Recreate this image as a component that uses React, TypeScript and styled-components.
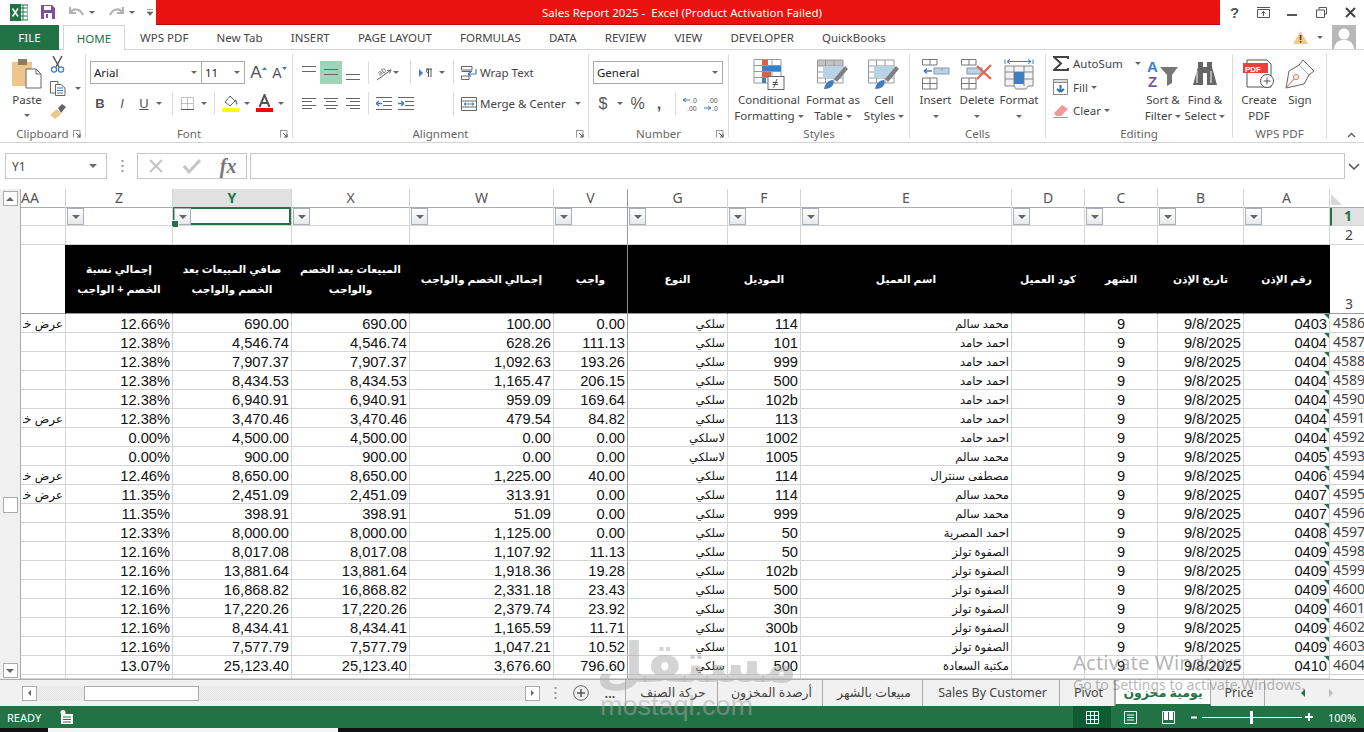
import React from "react";
import styled, { createGlobalStyle, css } from "styled-components";

const UI_FONT = `"Noto Sans", "Open Sans", "Liberation Sans", sans-serif`;
const CELL_FONT = `"Liberation Sans", "DejaVu Sans", sans-serif`;

const GlobalStyle = createGlobalStyle`
  html, body { margin: 0; padding: 0; height: 100%; overflow: hidden; background: #fff; }
  * { box-sizing: border-box; }
  svg { display: block; flex-shrink: 0; }
`;

const Win = styled.div`
  position: relative;
  width: 1364px;
  height: 732px;
  display: flex;
  flex-direction: column;
  overflow: hidden;
  font-family: ${UI_FONT};
  font-size: 11.5px;
  color: #444;
  background: #fff;
`;

/* ---------- title bar ---------- */
const TitleBar = styled.div`
  height: 25px;
  display: flex;
  align-items: flex-start;
  flex-shrink: 0;
`;
const Qat = styled.div`
  width: 156px;
  height: 24px;
  display: flex;
  align-items: center;
  padding-left: 10px;
  flex-shrink: 0;
`;
const RedTitle = styled.div`
  width: 1064px;
  height: 25px;
  background: #ea1111;
  border-bottom: 1px solid #b80d0d;
  color: #fff;
  font-size: 11.5px;
  line-height: 25px;
  text-align: center;
  white-space: pre;
  padding-right: 12px;
  flex-shrink: 0;
`;
const WinControls = styled.div`
  flex: 1;
  height: 24px;
  display: flex;
  align-items: center;
`;
const CtrlBtn = styled.div`
  width: 29px;
  display: flex;
  justify-content: center;
  flex-shrink: 0;
`;

/* ---------- ribbon tabs ---------- */
const TabStrip = styled.div`
  height: 25px;
  display: flex;
  border-bottom: 1px solid #d4d4d4;
  flex-shrink: 0;
`;
const FileTab = styled.div`
  width: 59px;
  height: 25px;
  background: #217346;
  color: #fff;
  text-align: center;
  line-height: 25px;
  margin-right: 4px;
`;
const RibbonTab = styled.div<{ $active?: boolean }>`
  height: 25px;
  padding: 0 14.1px;
  line-height: 25px;
  white-space: nowrap;
  ${(p) =>
    p.$active &&
    css`
      width: 62px;
      padding: 0;
      text-align: center;
      margin-right: 1px;
      color: #217346;
      background: #fff;
      border: 1px solid #d4d4d4;
      border-bottom: 0;
    `}
`;
const Account = styled.div`
  margin-left: auto;
  display: flex;
  align-items: center;
  height: 24px;
  gap: 9px;
  padding-right: 8px;
`;
const Avatar = styled.div`
  width: 24px;
  height: 24px;
  background: #b8b8b8;
`;

/* ---------- ribbon ---------- */
const Ribbon = styled.div`
  height: 93px;
  display: flex;
  border-bottom: 1px solid #d4d4d4;
  padding-top: 4px;
  padding-bottom: 4px;
  position: relative;
  flex-shrink: 0;
`;
const Group = styled.div<{ $w: number }>`
  width: ${(p) => p.$w}px;
  display: flex;
  flex-direction: column;
  border-right: 1px solid #dcdcdc;
  flex-shrink: 0;
`;
const GroupBody = styled.div<{ $pad?: number; $col?: boolean }>`
  flex: 1;
  display: flex;
  flex-direction: ${(p) => (p.$col ? "column" : "row")};
  padding-left: ${(p) => p.$pad ?? 0}px;
  min-height: 0;
`;
const GroupLabel = styled.div`
  height: 16px;
  margin-bottom: -4px;
  line-height: 16px;
  text-align: center;
  color: #666;
  position: relative;
`;
const Launcher = styled.span`
  position: absolute;
  right: 4px;
  top: 4px;
`;
const Collapse = styled.span`
  position: absolute;
  right: 8px;
  bottom: 4px;
`;
const BigBtn = styled.div<{ $w: number }>`
  width: ${(p) => p.$w}px;
  display: flex;
  flex-direction: column;
  align-items: center;
  text-align: center;
  line-height: 16px;
  padding-top: 2px;
  flex-shrink: 0;
  white-space: nowrap;
`;
const BigIcon = styled.div`
  height: 36px;
  display: flex;
  align-items: center;
  justify-content: center;
`;
const SmallStack = styled.div<{ $w?: number }>`
  ${(p) => p.$w && `width: ${p.$w}px;`}
  display: flex;
  flex-direction: column;
  padding-top: 1px;
  gap: 6.500px;
  flex-shrink: 0;
`;
const Row = styled.div<{ $h?: number; $mt?: number; $gap?: number }>`
  display: flex;
  align-items: center;
  height: ${(p) => p.$h ?? 23}px;
  margin-top: ${(p) => p.$mt ?? 0}px;
  gap: ${(p) => p.$gap ?? 0}px;
  white-space: nowrap;
`;
const Spacer = styled.span<{ $w: number }>`
  display: inline-block;
  width: ${(p) => p.$w}px;
  flex-shrink: 0;
`;
const Divider = styled.span`
  width: 1px;
  height: 23px;
  background: #dcdcdc;
  flex-shrink: 0;
`;
const Combo = styled.div<{ $w: number }>`
  width: ${(p) => p.$w}px;
  height: 23px;
  border: 1px solid #ababab;
  background: #fff;
  display: flex;
  align-items: center;
  justify-content: space-between;
  padding: 0 4px 0 3px;
  color: #222;
  margin-right: -1px;
  flex-shrink: 0;
`;
const Caret = styled.span<{ $ml?: number }>`
  display: inline-block;
  width: 0;
  height: 0;
  border-left: 3px solid transparent;
  border-right: 3px solid transparent;
  border-top: 3px solid #666;
  margin-left: ${(p) => p.$ml ?? 0}px;
  flex-shrink: 0;
`;
const Letter = styled.span<{ $w: number; $b?: boolean; $i?: boolean; $u?: boolean; $size?: number }>`
  width: ${(p) => p.$w}px;
  text-align: center;
  font-family: ${CELL_FONT};
  font-size: ${(p) => p.$size ?? 13}px;
  font-weight: ${(p) => (p.$b ? 700 : 400)};
  font-style: ${(p) => (p.$i ? "italic" : "normal")};
  text-decoration: ${(p) => (p.$u ? "underline" : "none")};
  color: #555;
  flex-shrink: 0;
`;
const AlignSel = styled.span<{ $on?: boolean }>`
  width: 22px;
  height: 23px;
  display: flex;
  align-items: center;
  justify-content: center;
  background: ${(p) => (p.$on ? "#9fd5b7" : "transparent")};
`;

/* ---------- formula bar ---------- */
const FormulaBar = styled.div`
  height: 46px;
  padding-top: 10px;
  padding-left: 5px;
  display: flex;
  align-items: flex-start;
  flex-shrink: 0;
`;
const NameBox = styled.div`
  width: 102px;
  height: 26px;
  border: 1px solid #c6c6c6;
  display: flex;
  align-items: center;
  justify-content: space-between;
  padding: 0 9px 0 6px;
  color: #444;
  font-size: 12px;
`;
const Dots = styled.div`
  width: 30px;
  height: 26px;
  display: flex;
  align-items: center;
  justify-content: center;
`;
const FxBox = styled.div`
  width: 110px;
  height: 26px;
  border: 1px solid #c6c6c6;
  display: flex;
  align-items: center;
  justify-content: space-around;
  margin-right: 3px;
`;
const FxMark = styled.span`
  font-family: "Liberation Serif", serif;
  font-style: italic;
  font-weight: 700;
  font-size: 20px;
  color: #777;
`;
const FormulaInput = styled.div`
  width: 1095px;
  height: 26px;
  border: 1px solid #c6c6c6;
`;
const FormulaChevron = styled.div`
  height: 26px;
  width: 18px;
  display: flex;
  align-items: center;
  justify-content: center;
`;

/* ---------- sheet ---------- */
const Workspace = styled.div`
  display: flex;
  height: 490px;
  flex-shrink: 0;
`;
const LeftRail = styled.div`
  width: 21px;
  background: #f0f0f0;
  border-right: 1px solid #ababab;
  display: flex;
  flex-direction: column;
  align-items: center;
  justify-content: space-between;
  padding: 2px 0 1px;
  position: relative;
  flex-shrink: 0;
`;
const RailBtn = styled.div`
  width: 15px;
  height: 15px;
  border: 1px solid #ababab;
  background: #fff;
  display: flex;
  align-items: center;
  justify-content: center;
`;
const RailThumb = styled.div`
  position: absolute;
  left: 3px;
  top: 308px;
  width: 15px;
  height: 16px;
  background: #fff;
  border: 1px solid #ababab;
`;
const Sheet = styled.div`
  flex: 1;
  overflow: hidden;
`;
const COLS = "45px 107px 119px 118px 144px 74px 100px 73px 211px 73px 73px 86px 86px 34px";
const SheetRow = styled.div<{ $h: number }>`
  display: grid;
  grid-template-columns: ${COLS};
  height: ${(p) => p.$h}px;
`;
const ColHead = styled.div<{ $sel?: boolean; $freeze?: boolean; $first?: boolean }>`
  border-right: 1px solid ${(p) => (p.$freeze ? "#9a9a9a" : "#d4d4d4")};
  border-bottom: 1px solid #ababab;
  background: ${(p) => (p.$sel ? "#e1e1e1" : "#fff")};
  color: ${(p) => (p.$sel ? "#217346" : "#555")};
  font-weight: ${(p) => (p.$sel ? 700 : 400)};
  font-size: 14px;
  line-height: 18px;
  text-align: ${(p) => (p.$first ? "left" : "center")};
`;
const Corner = styled.div`
  border-bottom: 1px solid #ababab;
  position: relative;
  &::after {
    content: "";
    position: absolute;
    right: 22px;
    bottom: 2px;
    border-style: solid;
    border-width: 0 0 11px 11px;
    border-color: transparent transparent #d8d8d8 transparent;
    transform: scaleX(-1);
  }
`;
const RowHead = styled.div<{ $sel?: boolean; $bottom?: boolean; $dark?: boolean }>`
  font-family: ${UI_FONT};
  font-size: 14px;
  color: #444;
  overflow: hidden;
  white-space: nowrap;
  padding: ${(p) => (p.$bottom ? "0 0 0 4px" : "0 0 0 3px")};
  line-height: 18px;
  display: flex;
  align-items: ${(p) => (p.$bottom ? "flex-end" : "center")};
  justify-content: ${(p) => (p.$bottom ? "center" : "flex-start")};
  border-bottom: 1px solid ${(p) => (p.$dark ? "#9a9a9a" : "#d4d4d4")};
  ${(p) =>
    p.$sel &&
    css`
      background: #e1e1e1;
      color: #217346;
      font-weight: 700;
      border-left: 2px solid #217346;
      padding: 0;
      justify-content: center;
    `}
`;
const Cell = styled.div<{ $freeze?: boolean; $sel?: boolean }>`
  position: relative;
  border-right: 1px solid ${(p) => (p.$freeze ? "#9a9a9a" : "#d4d4d4")};
  border-bottom: 1px solid #d4d4d4;
  ${(p) =>
    p.$sel &&
    css`
      box-shadow: 0 0 0 2px #217346 inset;
      &::after {
        content: "";
        position: absolute;
        left: -2px;
        bottom: -3px;
        width: 6px;
        height: 6px;
        background: #217346;
        border: 1px solid #fff;
      }
    `}
`;
const FilterBtn = styled.div`
  width: 17px;
  height: 17px;
  margin: 1px 0 0 1px;
  border: 1px solid #a9b0b8;
  background: linear-gradient(#ffffff, #e6e8ea);
  display: flex;
  align-items: center;
  justify-content: center;
`;
const HeadCell = styled.div<{ $freeze?: boolean }>`
  background: #000;
  color: #fff;
  font-family: ${CELL_FONT};
  font-size: 10.7px;
  font-weight: 700;
  line-height: 20px;
  display: flex;
  align-items: center;
  justify-content: center;
  text-align: center;
  direction: rtl;
  padding-bottom: 1px;
  border-right: 1px solid ${(p) => (p.$freeze ? "#8a8a8a" : "#000")};
  border-bottom: 1px solid #9a9a9a;
`;
const BlankHead = styled.div`
  border-right: 1px solid #000;
  border-bottom: 1px solid #9a9a9a;
`;
const Data = styled.div<{ $freeze?: boolean; $ar?: boolean; $center?: boolean; $flag?: boolean }>`
  position: relative;
  border-right: 1px solid ${(p) => (p.$freeze ? "#9a9a9a" : "#d4d4d4")};
  border-bottom: 1px solid #d4d4d4;
  font-family: ${CELL_FONT};
  font-size: ${(p) => (p.$ar ? 11.5 : 14.67)}px;
  color: #111;
  line-height: 20px;
  padding: 0 2px;
  text-align: ${(p) => (p.$center ? "center" : "right")};
  white-space: nowrap;
  overflow: hidden;
  ${(p) =>
    p.$flag &&
    css`
      &::after {
        content: "";
        position: absolute;
        top: 0;
        right: 0;
        width: 5px;
        height: 5px;
        background: #217346;
        clip-path: polygon(0 0, 100% 0, 100% 100%);
      }
    `}
`;
const Clipped = styled.div`
  direction: rtl;
  overflow: hidden;
  font-size: 12px;
  text-align: right;
`;

/* ---------- sheet tabs + status ---------- */
const SheetBar = styled.div`
  height: 27px;
  background: #f1f1f1;
  border-top: 1px solid #ababab;
  display: flex;
  align-items: center;
  padding-left: 22px;
  font-size: 12px;
  flex-shrink: 0;
`;
const ScrollBtn = styled.div`
  width: 15px;
  height: 15px;
  border: 1px solid #ababab;
  background: #fff;
  display: flex;
  align-items: center;
  justify-content: center;
  flex-shrink: 0;
`;
const HTrack = styled.div`
  width: 488px;
  height: 15px;
  background: repeating-conic-gradient(#e4e4e4 0 25%, #f1f1f1 0 50%) 0 0 / 2px 2px;
  padding-left: 47px;
  flex-shrink: 0;
`;
const HThumb = styled.div`
  width: 115px;
  height: 15px;
  background: #fff;
  border: 1px solid #ababab;
`;
const SheetTab = styled.div<{ $active?: boolean; $w: number }>`
  width: ${(p) => p.$w}px;
  height: 26px;
  line-height: 25px;
  text-align: center;
  white-space: nowrap;
  color: #444;
  border-right: 1px solid #ababab;
  flex-shrink: 0;
  font-size: 12.5px;
  font-family: "Noto Sans", "DejaVu Sans", sans-serif;
  padding-left: 3px;
  ${(p) =>
    p.$active &&
    css`
      background: #fff;
      color: #217346;
      font-weight: 700;
      padding-left: 0;
      border-bottom: 2px solid #217346;
      border-left: 1px solid #ababab;
    `}
`;
const TabsArea = styled.div`
  display: flex;
  align-items: center;
  height: 26px;
  border-left: 1px solid #ababab;
`;
const StatusBar = styled.div`
  height: 22px;
  background: #217346;
  color: #fff;
  display: flex;
  align-items: center;
  padding-left: 7px;
  font-size: 11px;
  flex-shrink: 0;
`;
const StatusRight = styled.div`
  margin-left: auto;
  width: 291px;
  height: 22px;
  display: flex;
  align-items: center;
`;
const ViewBtn = styled.div<{ $on?: boolean }>`
  width: 38px;
  height: 22px;
  display: flex;
  align-items: center;
  justify-content: center;
  ${(p) => p.$on && "background: #0f5c32;"}
`;
const Slider = styled.div`
  position: relative;
  width: 100px;
  height: 1px;
  background: #fff;
  margin: 0 3px 0 4px;
  &::after {
    content: "";
    position: absolute;
    left: 48px;
    top: -6px;
    width: 3px;
    height: 13px;
    background: #fff;
  }
`;
const Taskbar = styled.div`
  height: 4px;
  background: #111;
  padding-left: 48px;
  flex-shrink: 0;
`;
const TaskItem = styled.div`
  width: 290px;
  height: 4px;
  background: #f4f4f4;
`;

/* ---------- overlays ---------- */
const ActivateBox = styled.div`
  position: absolute;
  left: 1073px;
  top: 650px;
  color: rgba(110, 110, 110, 0.5);
  pointer-events: none;
  white-space: nowrap;
`;
const ActivateTitle = styled.div`
  font-size: 20.5px;
  line-height: 24px;
`;
const ActivateText = styled.div`
  font-size: 14px;
  line-height: 22px;
`;
const Watermark = styled.div`
  position: absolute;
  left: 596px;
  top: 632px;
  width: 175px;
  color: rgba(170, 170, 170, 0.5);
  font-weight: 700;
  pointer-events: none;
`;
const WatermarkAr = styled.div`
  font-family: "DejaVu Sans", sans-serif;
  font-size: 55px;
  line-height: 62px;
  text-align: center;
`;
const WatermarkEn = styled.div`
  font-family: "Liberation Sans", sans-serif;
  font-weight: 400;
  font-size: 27px;
  line-height: 24px;
  padding-left: 4px;
`;

/* ---------- icons ---------- */
const Ico = ({ w, h = w, children }: { w: number; h?: number; children: React.ReactNode }) => (
  <svg width={w} height={h} viewBox={`0 0 ${w} ${h}`}>
    {children}
  </svg>
);
const AlignLines = ({ y, mode }: { y: number[]; mode?: "l" | "c" | "r" | "f" }) => (
  <Ico w={14} h={14}>
    {y.map((v, i) => {
      const short = mode !== "f" && i % 2 === 1;
      const x1 = short && mode === "r" ? 4 : short && mode === "c" ? 2 : 0;
      const x2 = short && mode === "l" ? 10 : short && mode === "c" ? 12 : 14;
      return <rect key={i} x={x1} y={v} width={x2 - x1} height={1} fill="#666" />;
    })}
  </Ico>
);
const Launch = () => (
  <Ico w={8} h={8}>
    <path d="M0 .5H7V7.5M.5 0V7.5" fill="none" stroke="#999" />
    <path d="M3 3L7 7M7 4V7H4" fill="none" stroke="#555" />
  </Ico>
);
const PasteIcon = () => (
  <Ico w={30} h={32}>
    <rect x="0" y="4" width="20" height="24" fill="#eec58a" />
    <rect x="6" y="1" width="9" height="6" fill="#8d7a62" />
    <path d="M14 11H24L29 16V30H14Z" fill="#fff" stroke="#666" />
    <path d="M24 11V16H29" fill="none" stroke="#666" />
  </Ico>
);
const Scissors = () => (
  <Ico w={15} h={17}>
    <path d="M3 0L9 11M12 0L6 11" stroke="#555" strokeWidth="1.5" fill="none" />
    <circle cx="4" cy="13.5" r="2.6" fill="none" stroke="#3f7fbf" strokeWidth="1.3" />
    <circle cx="11" cy="13.5" r="2.6" fill="none" stroke="#3f7fbf" strokeWidth="1.3" />
  </Ico>
);
const CopyIcon = () => (
  <Ico w={16} h={15}>
    <path d="M.5.5H8V12H.5Z" fill="#fff" stroke="#666" />
    <path d="M5.500 3.500H11L15 7V14.500H5.500Z" fill="#fff" stroke="#666" />
    <path d="M7 7H13M7 9.500H13M7 12H13" stroke="#3f7fbf" />
  </Ico>
);
const Painter = () => (
  <Ico w={17} h={15}>
    <path d="M0 11L7 5L11 10L5 15Z" fill="#eec58a" />
    <path d="M8 4L12 0L16 3L11 9Z" fill="#666" />
  </Ico>
);
const GrowA = ({ up }: { up: boolean }) => (
  <Row $h={18}>
    <Letter $w={up ? 12 : 10} $size={up ? 17 : 14}>
      A
    </Letter>
    <Ico w={5} h={14}>
      <path d={up ? "M0 4L2.500 1L5 4Z" : "M0 1H5L2.500 4Z"} fill="#3f7fbf" />
    </Ico>
  </Row>
);
const Borders = () => (
  <Ico w={13} h={13}>
    <path d="M.5.5H12.500V12.500H.5ZM6.500.5V12.500M.5 6.500H12.500" fill="none" stroke="#888" strokeDasharray="1 1" />
    <path d="M0 12.500H13" stroke="#555" />
  </Ico>
);
const FillIcon = () => (
  <Ico w={17} h={19}>
    <path d="M3 8L8 2L13 7L8 12Z" fill="#fff" stroke="#666" />
    <path d="M13 6C15 8 15 10 14 10" fill="none" stroke="#3f7fbf" strokeWidth="1.5" />
    <rect x="0" y="14" width="17" height="4" fill="#ffff00" />
  </Ico>
);
const FontColor = () => (
  <Ico w={17} h={19}>
    <path d="M3.500 13L8.500 1L13.500 13M5.500 9H11.500" fill="none" stroke="#555" strokeWidth="2" />
    <rect x="0" y="14" width="17" height="4" fill="#ff0000" />
  </Ico>
);
const Orient = () => (
  <Ico w={16} h={16}>
    <path d="M1 15L15 5" stroke="#666" />
    <path d="M15 5L11 5.500M15 5L13.500 8.500" stroke="#666" fill="none" />
    <text x="2" y="9" fontSize="7.500" fontFamily="Liberation Sans" fill="#666" transform="rotate(-35 6 7)">
      ab
    </text>
  </Ico>
);
const Rtl = () => (
  <Ico w={14} h={10}>
    <path d="M0 1V9L4 5Z" fill="#3f7fbf" />
    <path d="M9.500 1V9M12 1V9M7 1H13M9.500 1A2 2 0 0 0 9.500 5" fill="none" stroke="#555" />
  </Ico>
);
const Indent = ({ flip }: { flip?: boolean }) => (
  <Ico w={16} h={13}>
    <path d="M0 .5H16M7 4.500H16M7 8.500H16M0 12.500H16" stroke="#666" />
    <path d={flip ? "M0 6.500H6M0 6.500L3 4M0 6.500L3 9" : "M0 6.500H6M6 6.500L3 4M6 6.500L3 9"} fill="none" stroke="#3f7fbf" strokeWidth="1.300" />
  </Ico>
);
const WrapIcon = () => (
  <Ico w={16} h={14}>
    <path d="M.5.5H11V4H.5ZM.5 10H8V13.500H.5ZM.5 5.500H11" fill="none" stroke="#666" />
    <path d="M15 3V8H7M7 8L10 5.500M7 8L10 10.500" fill="none" stroke="#3f7fbf" strokeWidth="1.200" />
  </Ico>
);
const MergeIcon = () => (
  <Ico w={16} h={14}>
    <path d="M.5.5H15.500V13.500H.5ZM.5 4H15.500M.5 10H15.500" fill="none" stroke="#666" />
    <path d="M3 7H13M3 7L5 5.500M3 7L5 8.500M13 7L11 5.500M13 7L11 8.500" fill="none" stroke="#3f7fbf" />
  </Ico>
);
const DecIcon = ({ more }: { more?: boolean }) => (
  <Ico w={17} h={16}>
    <text x={more ? 8 : 4} y="7" fontSize="7" fontFamily="Liberation Sans" fill="#555">
      {more ? ".0" : ".00"}
    </text>
    <text x={more ? 4 : 8} y="15" fontSize="7" fontFamily="Liberation Sans" fill="#555">
      {more ? ".00" : ".0"}
    </text>
    <path d={more ? "M0 4H7M0 4L3 2M0 4L3 6" : "M0 12H7M7 12L4 10M7 12L4 14"} fill="none" stroke="#3f7fbf" />
  </Ico>
);
const CondFmt = () => (
  <Ico w={32} h={31}>
    <path d="M1 .5H28V24H1ZM1 6.500H28M1 12.500H28M1 18.500H28M10 .5V24M19 .5V24" fill="#fff" stroke="#999" />
    <rect x="9" y="1" width="6" height="5" fill="#d8604a" />
    <rect x="9" y="7" width="19" height="5" fill="#3f7fbf" />
    <rect x="9" y="13" width="9" height="5" fill="#d8604a" />
    <rect x="9" y="19" width="4" height="5" fill="#3f7fbf" />
    <rect x="15" y="17.500" width="16" height="13" fill="#fff" stroke="#666" />
    <text x="19" y="28" fontSize="11" fill="#444">
      ≠
    </text>
  </Ico>
);
const TableBrush = ({ cell }: { cell?: boolean }) => (
  <Ico w={32} h={30}>
    <path d="M.5 1H26V24H.5ZM.5 7H26M.5 13H26M.5 19H26M8.500 1V24M17 1V24" fill="#fff" stroke="#999" />
    {!cell && <rect x="1" y="1" width="25" height="6" fill="#999" opacity={0.6} />}
    <rect x="6" y="7" width="20" height="12" fill="#b9d3e6" />
    <path d="M7 30C8 24 12 21 16 21C18 25 15 30 7 30Z" fill="#3f7fbf" />
    <path d="M17 20L28 7L31 10L20 23Z" fill="#7f7f7f" />
  </Ico>
);
const CellsBase = () => (
  <path d="M.5.5H15V6H.5ZM8 .5V6M.5 19H15V30H.5ZM.5 24.500H15M8 19V30" fill="#fff" stroke="#777" />
);
const InsertIcon = () => (
  <Ico w={28} h={31}>
    <CellsBase />
    <rect x="12" y="9" width="15" height="6" fill="#b9d3e6" stroke="#8b98a5" />
    <path d="M20 12V9" stroke="#8b98a5" />
    <path d="M2 12H10M2 12L5 9.500M2 12L5 14.500" fill="none" stroke="#3f7fbf" strokeWidth="1.500" />
  </Ico>
);
const DeleteIcon = () => (
  <Ico w={32} h={31}>
    <CellsBase />
    <rect x="6" y="9" width="15" height="6" fill="#b9d3e6" stroke="#8b98a5" />
    <path d="M16 7L30 20M30 6L16 20" stroke="#e8604a" strokeWidth="2.200" />
  </Ico>
);
const FormatIcon = () => (
  <Ico w={30} h={31}>
    <path d="M1 5V.5M29 5V.5M3 2.500H27M3 2.500L6 .5M3 2.500L6 5M27 2.500L24 .5M27 2.500L24 5" fill="none" stroke="#3f7fbf" />
    <path d="M1 7H29V27L24 27L22 30H12L10 27H1ZM1 13H29M1 20H29M10 7V27M20 7V27" fill="#f2f2f2" stroke="#888" />
    <rect x="10" y="13" width="10" height="12" fill="#3f7fbf" />
  </Ico>
);
const SigmaIcon = () => (
  <Ico w={16} h={15}>
    <path d="M15 3V1H1L8 7.500L1 14H15V12" fill="none" stroke="#444" strokeWidth="2" />
  </Ico>
);
const FillDown = () => (
  <Ico w={16} h={16}>
    <rect x=".5" y=".5" width="14" height="15" fill="#fff" stroke="#888" />
    <rect x=".5" y=".5" width="14" height="3" fill="#ddd" stroke="#888" />
    <path d="M7.500 6V13M7.500 13L4 10M7.500 13L11 10" fill="none" stroke="#2a70b8" strokeWidth="2" />
  </Ico>
);
const Eraser = () => (
  <Ico w={16} h={14}>
    <path d="M1 9L9 1L15 5L8 12H3Z" fill="#ee9a9a" />
    <path d="M0 13.500H15" stroke="#999" />
  </Ico>
);
const SortIcon = () => (
  <Ico w={32} h={30}>
    <text x="0" y="13" fontSize="15" fontWeight="700" fontFamily="Liberation Sans" fill="#3f7fbf">
      A
    </text>
    <text x="1" y="28" fontSize="15" fontWeight="700" fontFamily="Liberation Sans" fill="#7a5aa6">
      Z
    </text>
    <path d="M13 8H31L25 16V24L20 27V16Z" fill="#777" />
  </Ico>
);
const Binoculars = () => (
  <Ico w={26} h={26}>
    <path d="M6 1H11V6H15V1H20V6L25 24H15V12H11V24H1L6 6Z" fill="#666" />
    <path d="M5 10V22M19 10V22" stroke="#fff" />
  </Ico>
);
const PdfIcon = () => (
  <Ico w={32} h={30}>
    <path d="M4 1H24L28 5V28H4Z" fill="#fff" stroke="#555" />
    <rect x="0" y="4" width="25" height="10" fill="#e8413a" />
    <text x="2" y="12.500" fontSize="8" fontWeight="700" fontFamily="Liberation Sans" fill="#fff">
      PDF
    </text>
    <circle cx="24" cy="22" r="6.500" fill="#fff" stroke="#555" />
    <path d="M20.500 22H27.500M24 18.500V25.500" stroke="#555" />
  </Ico>
);
const SignIcon = () => (
  <Ico w={30} h={30}>
    <path d="M18 1L29 12L24 16L14 6Z" fill="#fff" stroke="#666" />
    <path d="M14 6L4 12L1 29L19 25L24 16" fill="#fff" stroke="#666" />
    <path d="M1 29L9 20" stroke="#e8604a" />
    <circle cx="11" cy="18" r="2.500" fill="none" stroke="#e8604a" />
  </Ico>
);
const Grip = () => (
  <Ico w={3} h={14}>
    <path d="M1.500 1V3M1.500 6V8M1.500 11V13" stroke="#999" strokeWidth="2" />
  </Ico>
);
const Arrow = ({ dir, color = "#666", size = 3 }: { dir: "up" | "down" | "left" | "right"; color?: string; size?: number }) => {
  const s = size * 2;
  const paths = {
    up: `M0 ${size}L${size} 0L${s} ${size}Z`,
    down: `M0 0H${s}L${size} ${size}Z`,
    left: `M${size} 0V${s}L0 ${size}Z`,
    right: `M0 0V${s}L${size} ${size}Z`,
  };
  const horiz = dir === "left" || dir === "right";
  return (
    <Ico w={horiz ? size : s} h={horiz ? s : size}>
      <path d={paths[dir]} fill={color} />
    </Ico>
  );
};

/* ---------- data ---------- */
type Rec = [string, string, string, string, string, string, string, string, string, string, string];

const WIRED = "سلكي";
const NOWIRE = "لاسلكي";
const SALEM = "محمد سالم";
const HAMED = "احمد حامد";
const SAFWA = "الصفوة تولز";
const OFFER = "عرض خصم";

// row, permit, customer, model, type, tax, discount, after, net, pct, note
const rows: Rec[] = [
  ["4586", "0403", SALEM, "114", WIRED, "0.00", "100.00", "690.00", "690.00", "12.66%", OFFER],
  ["4587", "0404", HAMED, "101", WIRED, "111.13", "628.26", "4,546.74", "4,546.74", "12.38%", ""],
  ["4588", "0404", HAMED, "999", WIRED, "193.26", "1,092.63", "7,907.37", "7,907.37", "12.38%", ""],
  ["4589", "0404", HAMED, "500", WIRED, "206.15", "1,165.47", "8,434.53", "8,434.53", "12.38%", ""],
  ["4590", "0404", HAMED, "102b", WIRED, "169.64", "959.09", "6,940.91", "6,940.91", "12.38%", ""],
  ["4591", "0404", HAMED, "113", WIRED, "84.82", "479.54", "3,470.46", "3,470.46", "12.38%", OFFER],
  ["4592", "0404", HAMED, "1002", NOWIRE, "0.00", "0.00", "4,500.00", "4,500.00", "0.00%", ""],
  ["4593", "0405", SALEM, "1005", NOWIRE, "0.00", "0.00", "900.00", "900.00", "0.00%", ""],
  ["4594", "0406", "مصطفى سنترال", "114", WIRED, "40.00", "1,225.00", "8,650.00", "8,650.00", "12.46%", OFFER],
  ["4595", "0407", SALEM, "114", WIRED, "0.00", "313.91", "2,451.09", "2,451.09", "11.35%", OFFER],
  ["4596", "0407", SALEM, "999", WIRED, "0.00", "51.09", "398.91", "398.91", "11.35%", ""],
  ["4597", "0408", "احمد المصرية", "50", WIRED, "0.00", "1,125.00", "8,000.00", "8,000.00", "12.33%", ""],
  ["4598", "0409", SAFWA, "50", WIRED, "11.13", "1,107.92", "8,017.08", "8,017.08", "12.16%", ""],
  ["4599", "0409", SAFWA, "102b", WIRED, "19.28", "1,918.36", "13,881.64", "13,881.64", "12.16%", ""],
  ["4600", "0409", SAFWA, "500", WIRED, "23.43", "2,331.18", "16,868.82", "16,868.82", "12.16%", ""],
  ["4601", "0409", SAFWA, "30n", WIRED, "23.92", "2,379.74", "17,220.26", "17,220.26", "12.16%", ""],
  ["4602", "0409", SAFWA, "300b", WIRED, "11.71", "1,165.59", "8,434.41", "8,434.41", "12.16%", ""],
  ["4603", "0409", SAFWA, "101", WIRED, "10.52", "1,047.21", "7,577.79", "7,577.79", "12.16%", ""],
  ["4604", "0410", "مكتبة السعادة", "500", WIRED, "796.60", "3,676.60", "25,123.40", "25,123.40", "13.07%", ""],
];

const letters = ["AA", "Z", "Y", "X", "W", "V", "G", "F", "E", "D", "C", "B", "A"];
const titles: React.ReactNode[] = [
  <>إجمالي نسبة<br />الخصم + الواجب</>,
  <>صافي المبيعات بعد<br />الخصم والواجب</>,
  <>المبيعات بعد الخصم<br />والواجب</>,
  "إجمالي الخصم والواجب",
  "واجب",
  "النوع",
  "الموديل",
  "اسم العميل",
  "كود العميل",
  "الشهر",
  "تاريخ الإذن",
  "رقم الإذن",
];
const ribbonTabs = ["WPS PDF", "New Tab", "INSERT", "PAGE LAYOUT", "FORMULAS", "DATA", "REVIEW", "VIEW", "DEVELOPER", "QuickBooks"];

const isFreeze = (l: string) => l === "V";

export default function App() {
  return (
    <Win>
      <GlobalStyle />

      <TitleBar>
        <Qat>
          <Ico w={18} h={17}>
            <rect x="7" y="1" width="11" height="15" fill="#fff" stroke="#217346" />
            <path d="M10 4H17M10 8H17M10 12H17M13 1V16" stroke="#217346" />
            <rect x="0" y="0" width="11" height="17" fill="#217346" />
            <path d="M2.500 4.500L8 12.500M8 4.500L2.500 12.500" stroke="#fff" strokeWidth="1.500" />
          </Ico>
          <Spacer $w={13} />
          <Ico w={14} h={14}>
            <path d="M0 0H11L14 3V14H0Z" fill="#7f4f9f" />
            <rect x="3" y="1" width="7" height="4" fill="#fff" />
            <rect x="3" y="8" width="8" height="6" fill="#fff" />
            <rect x="5" y="9" width="2" height="4" fill="#7f4f9f" />
          </Ico>
          <Spacer $w={14} />
          <Ico w={15} h={13}>
            <path d="M1 1V7H7M1 7C4 2 11 2 14 9" fill="none" stroke="#b3b3b3" strokeWidth="2.200" />
          </Ico>
          <Caret $ml={5} />
          <Spacer $w={14} />
          <Ico w={15} h={13}>
            <path d="M14 1V7H8M14 7C11 2 4 2 1 9" fill="none" stroke="#b3b3b3" strokeWidth="2.200" />
          </Ico>
          <Caret $ml={5} />
          <Spacer $w={12} />
          <Ico w={6} h={7}>
            <path d="M0 .5H6M0 3H6L3 6.500Z" fill="#666" stroke="#666" strokeWidth=".6" />
          </Ico>
        </Qat>
        <RedTitle>{"Sales Report 2025 -  Excel (Product Activation Failed)"}</RedTitle>
        <WinControls>
          <CtrlBtn><Letter $w={10} $b $size={15}>?</Letter></CtrlBtn>
          <CtrlBtn>
            <Ico w={13} h={11}>
              <path d="M.5 2.500H12.500V10.500H.5ZM0 .5H13M6.500 9V4.500M4.500 6.500L6.500 4.500L8.500 6.500" fill="none" stroke="#555" />
            </Ico>
          </CtrlBtn>
          <CtrlBtn>
            <Ico w={11} h={11}>
              <rect x="0" y="7" width="10" height="2" fill="#555" />
            </Ico>
          </CtrlBtn>
          <CtrlBtn>
            <Ico w={11} h={11}>
              <path d="M3 2.500V.5H10.500V7H8.500M.5 3H8.500V10.500H.5Z" fill="none" stroke="#555" />
            </Ico>
          </CtrlBtn>
          <CtrlBtn>
            <Ico w={11} h={11}>
              <path d="M1 1L10 10M10 1L1 10" stroke="#444" strokeWidth="2" />
            </Ico>
          </CtrlBtn>
        </WinControls>
      </TitleBar>

      <TabStrip>
        <FileTab>FILE</FileTab>
        <RibbonTab $active>HOME</RibbonTab>
        {ribbonTabs.map((t) => (
          <RibbonTab key={t}>{t}</RibbonTab>
        ))}
        <Account>
          <Ico w={15} h={13}>
            <path d="M7.500 0L15 13H0Z" fill="#f6c88a" />
            <rect x="6.800" y="4" width="1.600" height="5" fill="#444" />
            <rect x="6.800" y="10" width="1.600" height="1.600" fill="#444" />
          </Ico>
          <Caret />
          <Avatar>
            <Ico w={24} h={24}>
              <circle cx="12" cy="9" r="5.500" fill="#fff" />
              <path d="M2 24C3 16 8 15 12 15C16 15 21 16 22 24Z" fill="#fff" />
            </Ico>
          </Avatar>
        </Account>
      </TabStrip>

      <Ribbon>
        <Group $w={86}>
          <GroupBody $pad={4}>
            <BigBtn $w={46}>
              <BigIcon><PasteIcon /></BigIcon>
              Paste
              <Row $h={14}><Caret /></Row>
            </BigBtn>
            <SmallStack>
              <Row $h={18}><Scissors /></Row>
              <Row $h={17}><CopyIcon /><Caret $ml={9} /></Row>
              <Row $h={16}><Painter /></Row>
            </SmallStack>
          </GroupBody>
          <GroupLabel>Clipboard<Launcher><Launch /></Launcher></GroupLabel>
        </Group>

        <Group $w={207}>
          <GroupBody $col $pad={4}>
            <Row $mt={7}>
              <Combo $w={112}>Arial<Caret /></Combo>
              <Combo $w={44}>11<Caret /></Combo>
              <Spacer $w={6} />
              <GrowA up />
              <Spacer $w={5} />
              <GrowA up={false} />
            </Row>
            <Row $mt={8}>
              <Spacer $w={2} />
              <Letter $w={16} $b>B</Letter>
              <Spacer $w={6} />
              <Letter $w={16} $i>I</Letter>
              <Spacer $w={6} />
              <Letter $w={16} $u>U</Letter>
              <Caret $ml={4} />
              <Spacer $w={10} />
              <Divider />
              <Spacer $w={8} />
              <Borders />
              <Caret $ml={7} />
              <Spacer $w={7} />
              <Divider />
              <Spacer $w={7} />
              <FillIcon />
              <Caret $ml={5} />
              <Spacer $w={6} />
              <FontColor />
              <Caret $ml={5} />
            </Row>
          </GroupBody>
          <GroupLabel>Font<Launcher><Launch /></Launcher></GroupLabel>
        </Group>

        <Group $w={296}>
          <GroupBody $col $pad={5}>
            <Row $mt={7}>
              <AlignSel><AlignLines y={[0, 5]} mode="f" /></AlignSel>
              <AlignSel $on><AlignLines y={[3, 8]} mode="f" /></AlignSel>
              <AlignSel><AlignLines y={[8, 13]} mode="f" /></AlignSel>
              <Spacer $w={4} />
              <Divider />
              <Spacer $w={7} />
              <Orient />
              <Caret $ml={1} />
              <Spacer $w={11} />
              <Divider />
              <Spacer $w={8} />
              <Rtl />
              <Caret $ml={6} />
              <Spacer $w={8} />
              <Divider />
              <Spacer $w={7} />
              <WrapIcon />
              <Spacer $w={3} />
              Wrap Text
            </Row>
            <Row $mt={8}>
              <AlignSel><AlignLines y={[1, 4, 8, 11]} mode="l" /></AlignSel>
              <AlignSel><AlignLines y={[1, 4, 8, 11]} mode="c" /></AlignSel>
              <AlignSel><AlignLines y={[1, 4, 8, 11]} mode="r" /></AlignSel>
              <Spacer $w={4} />
              <Divider />
              <Spacer $w={7} />
              <Indent flip />
              <Spacer $w={6} />
              <Indent />
              <Spacer $w={39} />
              <Divider />
              <Spacer $w={7} />
              <MergeIcon />
              <Spacer $w={3} />
              Merge &amp; Center
              <Caret $ml={9} />
            </Row>
          </GroupBody>
          <GroupLabel>Alignment<Launcher><Launch /></Launcher></GroupLabel>
        </Group>

        <Group $w={140}>
          <GroupBody $col $pad={4}>
            <Row $mt={7}>
              <Combo $w={130}>General<Caret /></Combo>
            </Row>
            <Row $mt={8}>
              <Spacer $w={4} />
              <Letter $w={12} $size={16}>$</Letter>
              <Caret $ml={8} />
              <Spacer $w={7} />
              <Letter $w={15} $size={16}>%</Letter>
              <Spacer $w={10} />
              <Letter $w={8} $b $size={16}>,</Letter>
              <Spacer $w={12} />
              <Divider />
              <Spacer $w={7} />
              <DecIcon more />
              <Spacer $w={4} />
              <DecIcon />
            </Row>
          </GroupBody>
          <GroupLabel>Number<Launcher><Launch /></Launcher></GroupLabel>
        </Group>

        <Group $w={181}>
          <GroupBody $pad={4}>
            <BigBtn $w={72}>
              <BigIcon><CondFmt /></BigIcon>
              <span>Conditional</span>
              <Row $h={16}>Formatting<Caret $ml={3} /></Row>
            </BigBtn>
            <BigBtn $w={56}>
              <BigIcon><TableBrush /></BigIcon>
              <span>Format as</span>
              <Row $h={16}>Table<Caret $ml={3} /></Row>
            </BigBtn>
            <BigBtn $w={46}>
              <BigIcon><TableBrush cell /></BigIcon>
              <span>Cell</span>
              <Row $h={16}>Styles<Caret $ml={3} /></Row>
            </BigBtn>
          </GroupBody>
          <GroupLabel>Styles</GroupLabel>
        </Group>

        <Group $w={136}>
          <GroupBody $pad={5}>
            <BigBtn $w={41}>
              <BigIcon><InsertIcon /></BigIcon>
              Insert
              <Row $h={16}><Caret /></Row>
            </BigBtn>
            <BigBtn $w={42}>
              <BigIcon><DeleteIcon /></BigIcon>
              Delete
              <Row $h={16}><Caret /></Row>
            </BigBtn>
            <BigBtn $w={42}>
              <BigIcon><FormatIcon /></BigIcon>
              Format
              <Row $h={16}><Caret /></Row>
            </BigBtn>
          </GroupBody>
          <GroupLabel>Cells</GroupLabel>
        </Group>

        <Group $w={187}>
          <GroupBody $pad={7}>
            <SmallStack $w={89}>
              <Row $h={17}><SigmaIcon /><Spacer $w={4} />AutoSum<Caret $ml={12} /></Row>
              <Row $h={17}><FillDown /><Spacer $w={4} />Fill<Caret $ml={3} /></Row>
              <Row $h={17}><Eraser /><Spacer $w={4} />Clear<Caret $ml={3} /></Row>
            </SmallStack>
            <BigBtn $w={42}>
              <BigIcon><SortIcon /></BigIcon>
              <span>Sort &amp;</span>
              <Row $h={16}>Filter<Caret $ml={3} /></Row>
            </BigBtn>
            <BigBtn $w={42}>
              <BigIcon><Binoculars /></BigIcon>
              <span>Find &amp;</span>
              <Row $h={16}>Select<Caret $ml={3} /></Row>
            </BigBtn>
          </GroupBody>
          <GroupLabel>Editing</GroupLabel>
        </Group>

        <Group $w={94}>
          <GroupBody $pad={4}>
            <BigBtn $w={44}>
              <BigIcon><PdfIcon /></BigIcon>
              <span>Create</span>
              <span>PDF</span>
            </BigBtn>
            <BigBtn $w={38}>
              <BigIcon><SignIcon /></BigIcon>
              Sign
            </BigBtn>
          </GroupBody>
          <GroupLabel>WPS PDF</GroupLabel>
        </Group>

        <Collapse>
          <Ico w={9} h={6}>
            <path d="M1 5L4.500 1.500L8 5" fill="none" stroke="#666" strokeWidth="1.500" />
          </Ico>
        </Collapse>
      </Ribbon>

      <FormulaBar>
        <NameBox>Y1<Arrow dir="down" size={4} /></NameBox>
        <Dots><Grip /></Dots>
        <FxBox>
          <Ico w={16} h={16}>
            <path d="M2 2L14 14M14 2L2 14" stroke="#c6c6c6" strokeWidth="2.200" />
          </Ico>
          <Ico w={18} h={16}>
            <path d="M1 8L6 14L17 2" fill="none" stroke="#c6c6c6" strokeWidth="3" />
          </Ico>
          <FxMark>fx</FxMark>
        </FxBox>
        <FormulaInput />
        <FormulaChevron>
          <Ico w={12} h={7}>
            <path d="M1 1L6 6L11 1" fill="none" stroke="#555" strokeWidth="1.500" />
          </Ico>
        </FormulaChevron>
      </FormulaBar>

      <Workspace>
        <LeftRail>
          <RailBtn><Arrow dir="up" size={4} /></RailBtn>
          <RailThumb />
          <RailBtn><Arrow dir="down" size={4} /></RailBtn>
        </LeftRail>
        <Sheet>
          <SheetRow $h={18}>
            {letters.map((l) => (
              <ColHead key={l} $sel={l === "Y"} $freeze={isFreeze(l)} $first={l === "AA"}>{l}</ColHead>
            ))}
            <Corner />
          </SheetRow>

          <SheetRow $h={19}>
            {letters.map((l) => (
              <Cell key={l} $sel={l === "Y"} $freeze={isFreeze(l)}>
                {l !== "AA" && (
                  <FilterBtn><Arrow dir="down" size={4} /></FilterBtn>
                )}
              </Cell>
            ))}
            <RowHead $sel>1</RowHead>
          </SheetRow>

          <SheetRow $h={19}>
            {letters.map((l) => (
              <Cell key={l} $freeze={isFreeze(l)} />
            ))}
            <RowHead $bottom>2</RowHead>
          </SheetRow>

          <SheetRow $h={69}>
            <BlankHead />
            {titles.map((t, i) => (
              <HeadCell key={i} $freeze={letters[i + 1] === "V"}>{t}</HeadCell>
            ))}
            <RowHead $bottom $dark>3</RowHead>
          </SheetRow>

          {rows.map((r) => (
            <SheetRow key={r[0]} $h={19}>
              <Data $ar>{r[10] && <Clipped>{r[10]}</Clipped>}</Data>
              <Data>{r[9]}</Data>
              <Data>{r[8]}</Data>
              <Data>{r[7]}</Data>
              <Data>{r[6]}</Data>
              <Data $freeze>{r[5]}</Data>
              <Data $ar>{r[4]}</Data>
              <Data>{r[3]}</Data>
              <Data $ar>{r[2]}</Data>
              <Data />
              <Data $center>9</Data>
              <Data>9/8/2025</Data>
              <Data $flag>{r[1]}</Data>
              <RowHead>{r[0]}</RowHead>
            </SheetRow>
          ))}
          <SheetRow $h={4}>
            {letters.map((l) => (
              <Cell key={l} $freeze={isFreeze(l)} />
            ))}
          </SheetRow>
        </Sheet>
      </Workspace>

      <SheetBar>
        <ScrollBtn><Arrow dir="left" /></ScrollBtn>
        <HTrack><HThumb /></HTrack>
        <ScrollBtn><Arrow dir="right" /></ScrollBtn>
        <Spacer $w={14} />
        <Grip />
        <Spacer $w={16} />
        <Ico w={16} h={16}>
          <circle cx="8" cy="8" r="7.300" fill="none" stroke="#666" />
          <path d="M4 8H12M8 4V12" stroke="#555" strokeWidth="1.500" />
        </Ico>
        <Spacer $w={14} />
        <Letter $w={14} $b>...</Letter>
        <Spacer $w={8} />
        <TabsArea>
          <SheetTab $w={92}>حركة الصنف</SheetTab>
          <SheetTab $w={105}>أرصدة المخزون</SheetTab>
          <SheetTab $w={100}>مبيعات بالشهر</SheetTab>
          <SheetTab $w={137}>Sales By Customer</SheetTab>
          <SheetTab $w={55}>Pivot</SheetTab>
          <SheetTab $w={96} $active>يومية مخزون</SheetTab>
          <SheetTab $w={54}>Price</SheetTab>
        </TabsArea>
        <Spacer $w={36} />
        <Arrow dir="left" color="#217346" size={4} />
        <Spacer $w={24} />
        <Arrow dir="right" color="#bbb" size={4} />
      </SheetBar>

      <StatusBar>
        READY
        <Spacer $w={19} />
        <Ico w={13} h={14}>
          <circle cx="3" cy="2.500" r="2.500" fill="#fff" />
          <rect x="1" y="4" width="12" height="10" fill="#fff" />
          <path d="M3 7H11M3 9.500H11M3 12H11" stroke="#217346" />
        </Ico>
        <StatusRight>
          <ViewBtn $on>
            <Ico w={13} h={13}>
              <path d="M.5.5H12.500V12.500H.5ZM4.500.5V12.500M8.500.5V12.500M.5 4.500H12.500M.5 8.500H12.500" fill="none" stroke="#fff" />
            </Ico>
          </ViewBtn>
          <ViewBtn>
            <Ico w={13} h={13}>
              <path d="M.5.5H12.500V12.500H.5ZM3 4H10M3 6.500H10M3 9H10" fill="none" stroke="#fff" />
            </Ico>
          </ViewBtn>
          <ViewBtn>
            <Ico w={13} h={13}>
              <path d="M.5.5H12.500V12.500H.5Z" fill="none" stroke="#fff" />
              <rect x="2" y="1" width="4" height="8" fill="#fff" />
              <rect x="7" y="1" width="4" height="8" fill="#fff" />
            </Ico>
          </ViewBtn>
          <Spacer $w={4} />
          <Ico w={7} h={7}>
            <rect x="0" y="2.500" width="6" height="2" fill="#fff" />
          </Ico>
          <Slider />
          <Ico w={8} h={8}>
            <path d="M0 4H8M4 0V8" stroke="#fff" strokeWidth="2" />
          </Ico>
          <Spacer $w={15} />
          100%
        </StatusRight>
      </StatusBar>
      <Taskbar><TaskItem /></Taskbar>

      <Watermark>
        <WatermarkAr>مستقل</WatermarkAr>
        <WatermarkEn>mostaql.com</WatermarkEn>
      </Watermark>
      <ActivateBox>
        <ActivateTitle>Activate Windows</ActivateTitle>
        <ActivateText>Go to Settings to activate Windows.</ActivateText>
      </ActivateBox>
    </Win>
  );
}
